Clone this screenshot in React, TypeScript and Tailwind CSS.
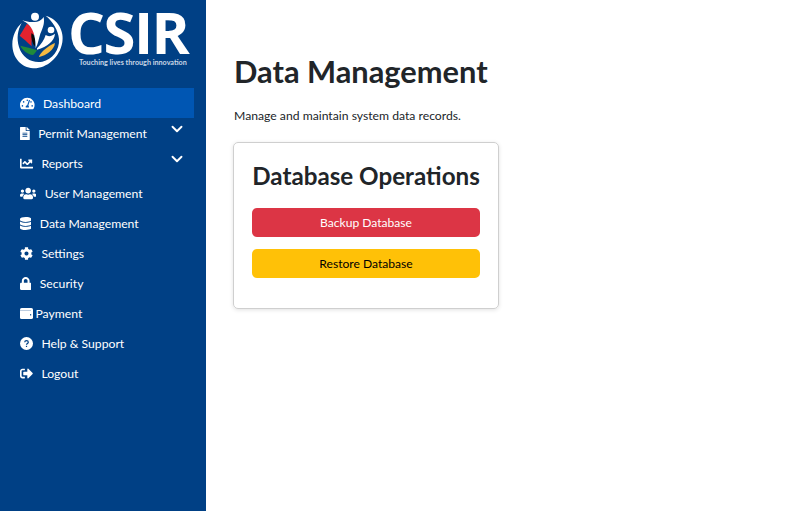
import {
  FaTachometerAlt,
  FaFileAlt,
  FaChartLine,
  FaUsers,
  FaDatabase,
  FaCog,
  FaLock,
  FaSignOutAlt,
} from "react-icons/fa"
import { ChevronDown } from "lucide-react"

function WalletIcon({ className }: { className?: string }) {
  return (
    <svg viewBox="0 0 13 13" className={className}>
      <rect x="0" y="1" width="13" height="11" rx="1.6" fill="#ffffff" />
      <rect x="0" y="3" width="11" height="0.7" fill="#9fb6d2" />
      <rect x="10" y="7.2" width="1.2" height="1.2" fill="#004085" />
    </svg>
  )
}

function HelpIcon({ className }: { className?: string }) {
  return (
    <svg viewBox="0 0 13 13" className={className}>
      <circle cx="6.5" cy="6.5" r="6.5" fill="#ffffff" />
      <path d="M4.7 5.2 C4.8 3.2 8.3 3.2 8.3 5.2 C8.3 6.5 6.5 6.4 6.5 7.8" fill="none" stroke="#004085" strokeWidth="1.2" />
      <rect x="5.9" y="8.8" width="1.2" height="1.2" fill="#004085" />
    </svg>
  )
}

const menu = [
  { label: "Dashboard", icon: FaTachometerAlt, size: "w-[14.6px]", gap: "mr-[8.4px]", active: true },
  { label: "Permit Management", icon: FaFileAlt, size: "w-[9.8px]", gap: "mr-[8.4px]", chevron: true },
  { label: "Reports", icon: FaChartLine, size: "w-[13px]", gap: "mr-[8.4px]", chevron: true },
  { label: "User Management", icon: FaUsers, size: "w-[16.3px]", gap: "mr-[8.4px]" },
  { label: "Data Management", icon: FaDatabase, size: "w-[11.4px]", gap: "mr-[8.4px]" },
  { label: "Settings", icon: FaCog, size: "w-[13px]", gap: "mr-[8.4px]" },
  { label: "Security", icon: FaLock, size: "w-[11.4px]", gap: "mr-[8.4px]" },
  { label: "Payment", icon: WalletIcon, size: "w-[13px]", gap: "mr-[2.5px]" },
  { label: "Help & Support", icon: HelpIcon, size: "w-[13px]", gap: "mr-[8.4px]" },
  { label: "Logout", icon: FaSignOutAlt, size: "w-[13px]", gap: "mr-[8.4px]" },
]

function Emblem() {
  return (
    <svg viewBox="0 0 210 210" className="h-[70px] w-[70px] shrink-0">
      <path
        d="M122 32 C160 42 178 80 172 112 C164 160 122 192 84 190 C50 188 22 160 22 118 C22 92 34 68 50 54 C38 76 34 100 42 126 C52 160 84 176 112 170 C142 164 164 136 162 102 C160 76 144 50 122 32 Z"
        fill="#ffffff"
      />
      <path d="M44 92 L66 56 C76 62 84 72 90 84 C82 92 78 106 80 124 C66 110 54 100 44 92 Z" fill="#e2232e" />
      <path d="M80 84 C91 94 93 110 89 124 C82 114 76 96 80 84 Z" fill="#0a0a0a" />
      <path d="M46 122 C60 126 82 130 96 136 C92 142 88 148 84 150 C68 148 52 136 46 122 Z" fill="#1f8a3a" />
      <path d="M150 114 C148 134 124 152 101 156 C108 140 128 124 150 114 Z" fill="#f4b942" />
      <circle cx="90" cy="35" r="12" fill="#ffffff" />
      <circle cx="138" cy="75" r="10" fill="#ffffff" />
      <path
        d="M52 46 C68 52 82 52 96 50 C106 48 112 42 116 36 C120 56 112 72 106 86 C102 98 100 114 92 130 C92 104 88 76 72 60 C66 54 58 50 52 46 Z"
        fill="#ffffff"
      />
      <path d="M96 130 C108 118 118 104 122 90 C130 96 140 94 150 86 C148 108 128 124 96 134 Z" fill="#ffffff" />
    </svg>
  )
}

export default function App() {
  return (
    <div className="flex h-[511px] w-[812px] overflow-hidden bg-white font-['Lato',sans-serif]">
      <aside className="w-[206px] shrink-0 bg-[#004085] text-white">
        <div className="flex h-[88px] items-start pt-[5px] pl-[5px]">
          <Emblem />
          <div className="-ml-[7px] flex flex-col pt-1">
            <span className="font-['Open_Sans',sans-serif] text-[58px] leading-[46px] font-bold tracking-[-1.5px]">
              CSIR
            </span>
            <span className="mt-[3px] ml-[11px] text-[7.2px] leading-[9px] font-bold whitespace-nowrap text-[#c9d6e6]">
              Touching lives through innovation
            </span>
          </div>
        </div>
        <nav className="flex flex-col">
          {menu.map((item) => {
            const Icon = item.icon
            return (
              <a
                key={item.label}
                href="#"
                className={
                  item.active
                    ? "mr-3 ml-2 flex h-[30px] items-center bg-[#0056b3] pl-3 text-[12.2px]"
                    : "relative mr-3 ml-2 flex h-[30px] items-center pl-3 text-[12.2px]"
                }
              >
                <Icon className={`${item.size} ${item.gap} h-[13px] shrink-0`} />
                <span className="pt-[3px]">{item.label}</span>
                {item.chevron && (
                  <ChevronDown className="absolute top-[2px] right-[8px] h-[18px] w-[18px]" strokeWidth={2.5} />
                )}
              </a>
            )
          })}
        </nav>
      </aside>
      <main className="flex-1 pt-[52px] pl-7 text-[#212529]">
        <h1 className="text-[30.8px] leading-[40px] font-bold">Data Management</h1>
        <p className="mt-[14px] text-[12.2px] leading-[20px]">Manage and maintain system data records.</p>
        <div className="mt-4 h-[167px] w-[266px] -translate-x-px rounded-[5px] border border-[#cfcfcf] px-[18px] pt-[17px] shadow-[0_1px_4px_rgba(0,0,0,0.12)]">
          <h2 className="text-center text-[24.2px] leading-[32px] font-bold whitespace-nowrap">Database Operations</h2>
          <button className="mt-4 block h-[29px] w-full rounded-[5px] bg-[#dc3545] pt-[2px] text-[12.1px] text-white">
            Backup Database
          </button>
          <button className="mt-3 block h-[29px] w-full rounded-[5px] bg-[#ffc107] pt-[2px] text-[12.1px] text-black">
            Restore Database
          </button>
        </div>
      </main>
    </div>
  )
}
